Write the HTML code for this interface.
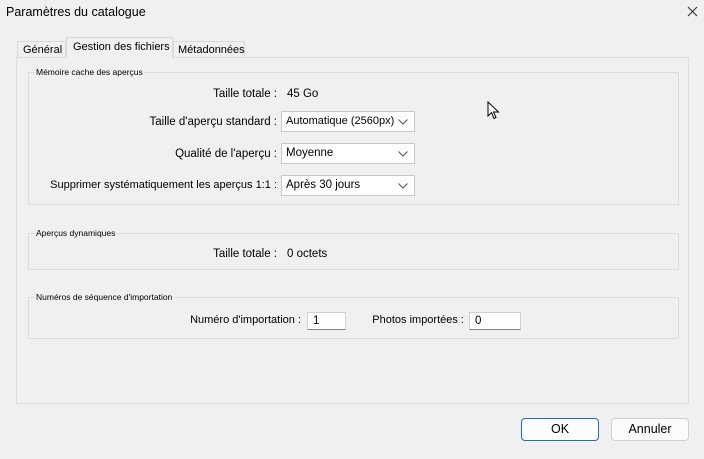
<!DOCTYPE html>
<html><head><meta charset="utf-8"><style>
*{margin:0;padding:0;box-sizing:border-box}
body{width:704px;height:459px;background:#f0f0f0;font-family:"Liberation Sans",sans-serif;font-size:11.5px;color:#000;position:relative;overflow:hidden}
.a{position:absolute;white-space:nowrap}
.r{position:absolute;white-space:nowrap;right:427px;text-align:right}
.grp{position:absolute;border:1px solid #dcdcdc}
.gl{position:absolute;font-size:8.5px;background:#f0f0f0;padding:0 1px;top:-6px;left:6px}
.cb{position:absolute;background:#fff;border:1px solid #c8c8c8;height:21px;padding:3px 0 0 4px;font-size:11.5px}
.cb svg{position:absolute;right:6px;top:7px}
.in{position:absolute;background:#fff;border:1px solid #d0d0d0;border-bottom:1px solid #888;height:18px;padding:2px 0 0 5px}
.btn{position:absolute;width:78px;height:23px;border:1px solid #d0d0d0;border-radius:4px;background:#fbfbfb;text-align:center;line-height:21px;font-size:12.5px}
</style></head><body>
<div class="a" style="left:6px;top:5px;font-size:12.5px">Paramètres du catalogue</div>
<svg class="a" style="left:687px;top:6px" width="11" height="11"><path d="M1 1L10 10M10 1L1 10" stroke="#333" stroke-width="1.1"/></svg>
<div class="a" style="left:16px;top:57px;width:673px;height:347px;border:1px solid #dcdcdc;background:#f0f0f0"></div>
<div class="a" style="left:17px;top:41px;width:49px;height:17px;border:1px solid #d9d9d9;border-bottom:none;padding:2px 0 0 5px;font-size:11px">Général</div>
<div class="a" style="left:66px;top:37px;width:107px;height:21px;border:1px solid #d9d9d9;border-bottom:none;background:#f0f0f0;padding:3px 0 0 6px;font-size:11px">Gestion des fichiers</div>
<div class="a" style="left:173px;top:41px;width:72px;height:17px;border:1px solid #d9d9d9;border-bottom:none;padding:2px 0 0 4px;font-size:11px">Métadonnées</div>
<div class="grp" style="left:28px;top:72px;width:651px;height:133px"><span class="gl">Mémoire cache des aperçus</span></div>
<div class="r" style="top:88px">Taille totale :</div>
<div class="a" style="left:287px;top:88px">45 Go</div>
<div class="r" style="top:116px">Taille d'aperçu standard :</div>
<div class="cb" style="left:281px;top:111px;width:134px;font-size:11px">Automatique (2560px)<svg width="10" height="6"><path d="M0.5 0.5L5 5L9.5 0.5" fill="none" stroke="#555"/></svg></div>
<div class="r" style="top:148px">Qualité de l'aperçu :</div>
<div class="cb" style="left:281px;top:143px;width:134px">Moyenne<svg width="10" height="6"><path d="M0.5 0.5L5 5L9.5 0.5" fill="none" stroke="#555"/></svg></div>
<div class="r" style="top:179px;font-size:11px">Supprimer systématiquement les aperçus 1:1 :</div>
<div class="cb" style="left:281px;top:175px;width:134px">Après 30 jours<svg width="10" height="6"><path d="M0.5 0.5L5 5L9.5 0.5" fill="none" stroke="#555"/></svg></div>
<div class="grp" style="left:28px;top:233px;width:651px;height:37px"><span class="gl">Aperçus dynamiques</span></div>
<div class="r" style="top:248px">Taille totale :</div>
<div class="a" style="left:287px;top:248px">0 octets</div>
<div class="grp" style="left:28px;top:297px;width:651px;height:42px"><span class="gl">Numéros de séquence d'importation</span></div>
<div class="a" style="right:403px;top:314px;font-size:11px">Numéro d'importation :</div>
<div class="in" style="left:307px;top:312px;width:39px">1</div>
<div class="a" style="right:240px;top:314px;font-size:11px">Photos importées :</div>
<div class="in" style="left:469px;top:312px;width:52px">0</div>
<svg class="a" style="left:487px;top:101px" width="14" height="20"><path d="M1 1L1 15L4.5 11.5L7 17.5L9 16.5L6.5 11L11.5 11Z" fill="#fff" stroke="#000" stroke-width="1"/></svg>
<div class="btn" style="left:521px;top:418px;border:1px solid #1a6fb8;background:#fdfdfd">OK</div>
<div class="btn" style="left:611px;top:418px">Annuler</div>
</body></html>
